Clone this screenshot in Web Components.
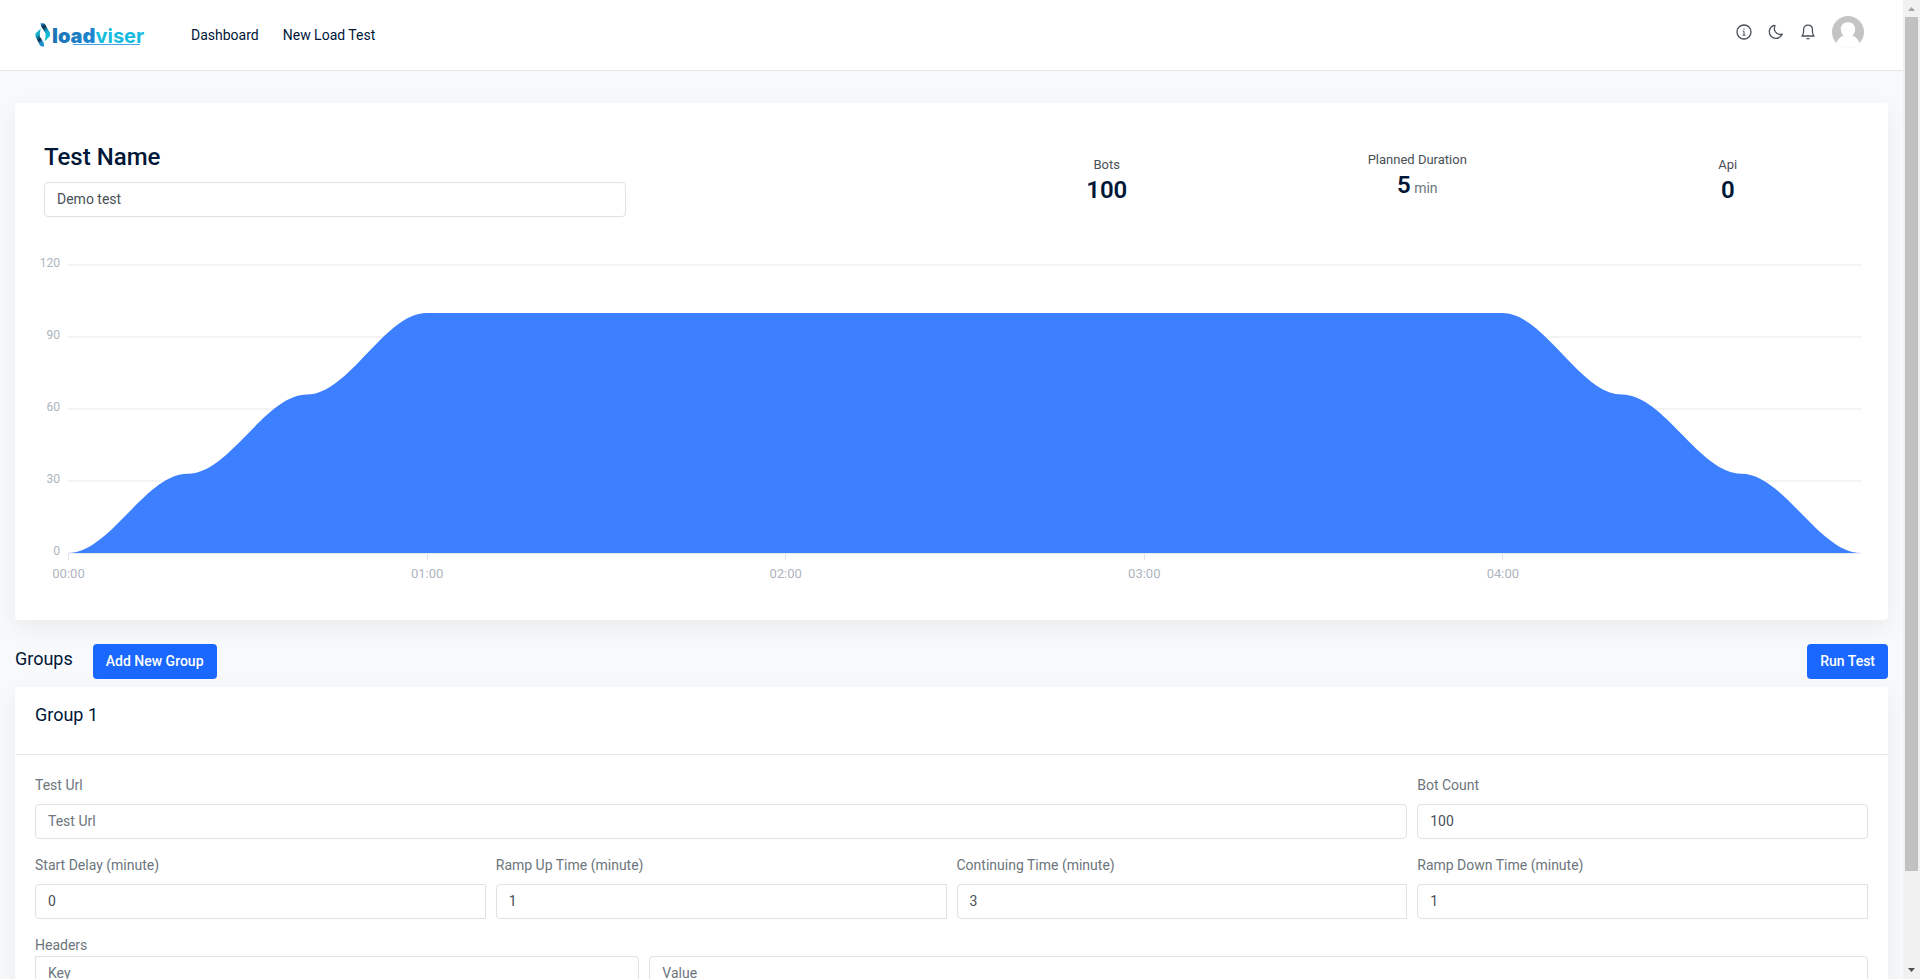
<!DOCTYPE html>
<html lang="en">
<head>
<meta charset="utf-8">
<meta name="viewport" content="width=device-width, initial-scale=1">
<title>Loadviser - New Load Test</title>
<style>
  html, body { height: 100%; }
  body {
    margin: 0;
    overflow: hidden;
    font: 14px/20px Roboto, "Liberation Sans", sans-serif;
    color: #495057;
    --ink: #001737;
    --muted: #6c757d;
    --line: #dee2e6;
    --primary: #1a68ff;
    --surface: #fff;
    --page: #f8f9fb;
  }
</style>
</head>
<body>

<app-shell>
  <top-bar slot="header"></top-bar>

  <panel-card>
    <test-summary>
      <test-name value="Demo test"></test-name>
      <stat-value label="Bots" value="100"></stat-value>
      <stat-value label="Planned Duration" value="5" unit="min"></stat-value>
      <stat-value label="Api" value="0"></stat-value>
    </test-summary>
    <load-chart></load-chart>
  </panel-card>

  <groups-bar></groups-bar>

  <panel-card>
    <group-form heading="Group 1">
      <form-field class="wide" label="Test Url" placeholder="Test Url"></form-field>
      <form-field label="Bot Count" value="100"></form-field>
      <form-field class="joined" label="Start Delay (minute)" value="0"></form-field>
      <form-field class="joined" label="Ramp Up Time (minute)" value="1"></form-field>
      <form-field class="joined" label="Continuing Time (minute)" value="3"></form-field>
      <form-field class="joined" label="Ramp Down Time (minute)" value="1"></form-field>
      <header-pair class="full"></header-pair>
    </group-form>
  </panel-card>
</app-shell>

<script>
const inputStyle = `
  input {
    box-sizing: border-box; width: 100%; height: 35px; margin: 0; padding: 0 12px 2px;
    border: 1px solid var(--line); border-radius: 4px; background: var(--surface);
    font: inherit; color: inherit; outline: none;
  }
  input::placeholder { color: var(--muted); opacity: 1; }
  input:focus { border-color: var(--primary); }
`;

function define(name, render) {
  customElements.define(name, class extends HTMLElement {
    constructor() {
      super();
      this.attachShadow({ mode: 'open' });
    }
    connectedCallback() {
      this.shadowRoot.innerHTML = render(this);
    }
  });
}
const attr = (el, name) => el.getAttribute(name) || '';

define('app-shell', () => `
  <style>
    :host { display: grid; grid-template-columns: minmax(0, 1fr) 17px; height: 100vh; background: var(--page); }
    .view { overflow: auto; scrollbar-width: none; }
    main { padding: 32px 15px; }
  </style>
  <div class="view">
    <slot name="header"></slot>
    <main><slot></slot></main>
  </div>
  <scroll-rail></scroll-rail>
`);

define('scroll-rail', () => `
  <style>
    :host { display: grid; grid-template-rows: 17px 94fr 10fr 17px; background: #f1f1f1; }
    svg { display: block; width: 17px; height: 17px; }
    svg:last-child { grid-row: 4; }
    .thumb { margin: 0 2px; background: #c1c1c1; }
  </style>
  <svg viewBox="0 0 17 17" aria-hidden="true"><path d="M5 11h7L8.500 7z" fill="#a3a3a3"/></svg>
  <div class="thumb"></div>
  <svg viewBox="0 0 17 17" aria-hidden="true"><path d="M5 6h7L8.500 10z" fill="#505050"/></svg>
`);

define('top-bar', () => `
  <style>
    :host { display: block; background: var(--surface); border-bottom: 1px solid #e4e7eb; }
    header { display: flex; align-items: center; height: 70px; padding: 0 39px 0 35px; }
    nav { display: flex; gap: 24px; margin-left: 44px; }
    a { color: var(--ink); text-decoration: none; }
    .brand svg { display: block; }
    .tools { display: flex; align-items: center; gap: 16px; margin: 0 0 6px auto; }
    button { display: block; padding: 0; border: 0; background: none; color: #495057; cursor: pointer; }
    button svg { display: block; }
  </style>
  <header>
    <a class="brand" href="#home" aria-label="loadviser">
      <svg width="112" height="28" viewBox="0 0 112 28">
        <defs>
          <linearGradient id="load" x1="0" x2="1"><stop offset="0" stop-color="#1c74b4"/><stop offset="1" stop-color="#1b9bf0"/></linearGradient>
          <linearGradient id="viser" x1="0" x2="1"><stop offset="0" stop-color="#12c2d8"/><stop offset="1" stop-color="#16b9e0"/></linearGradient>
          <linearGradient id="markL" x1="0" y1="0" x2="0.400" y2="1"><stop offset="0" stop-color="#12c6d8"/><stop offset="0.400" stop-color="#12a9c8"/><stop offset="0.700" stop-color="#0b2c46"/><stop offset="0.900" stop-color="#1c8fd0"/></linearGradient>
          <linearGradient id="markR" x1="0" y1="0" x2="0.400" y2="1"><stop offset="0" stop-color="#1c9ae6"/><stop offset="0.300" stop-color="#0b2c46"/><stop offset="0.600" stop-color="#12a9cf"/><stop offset="1" stop-color="#12c6d8"/></linearGradient>
        </defs>
        <path d="M5.800 7.500L0.500 12.500V15.500L5 24.500Q5.800 25.500 7.500 25.500H9.200L8.600 21.500L4.800 15.500L4.800 12Z" fill="url(#markL)"/>
        <path d="M5.500 2.200H7.500Q9.500 2.200 10.200 3.500L15 12V15L9.600 20.500L10.600 15.500V12.500L6.200 5.500Z" fill="url(#markR)"/>
        <text x="17" y="22" font-family="Inter, sans-serif" font-size="20"><tspan font-weight="900" fill="url(#load)">load</tspan><tspan font-weight="700" fill="url(#viser)">viser</tspan></text>
        <path d="M38 23.500H105" stroke="#45a5ea" stroke-width="1"/>
      </svg>
    </a>
    <nav>
      <a href="#dashboard">Dashboard</a>
      <a href="#new">New Load Test</a>
    </nav>
    <div class="tools">
      <button type="button" aria-label="Information">
        <svg width="16" height="16" viewBox="0 0 16 16" fill="none" stroke="currentColor" stroke-width="1.300">
          <circle cx="8" cy="8" r="7"/><path d="M6.800 7.200H8V11M6.500 11.200H9.500M7.400 5H8.600" stroke-width="1"/>
        </svg>
      </button>
      <button type="button" aria-label="Dark mode">
        <svg width="16" height="16" viewBox="0 0 16 16" fill="none" stroke="currentColor" stroke-width="1.300" stroke-linejoin="round">
          <path d="M5.200 1.600A6.700 6.700 0 1 0 14.200 10.200A6.300 6.300 0 0 1 7.400 7.800A6.300 6.300 0 0 1 7 1.600Q6 1.300 5.200 1.600Z"/>
        </svg>
      </button>
      <button type="button" aria-label="Notifications">
        <svg width="16" height="16" viewBox="0 0 16 16" fill="none" stroke="currentColor" stroke-width="1.300" stroke-linejoin="round" stroke-linecap="round">
          <path d="M2 12H14C12.800 11 12.400 9.500 12.400 7V5.500C12.400 3 10.700 1.200 8 1.200S3.600 3 3.600 5.500V7C3.600 9.500 3.200 11 2 12Z"/><path d="M7 14.700H9"/>
        </svg>
      </button>
      <button type="button" aria-label="Account">
        <svg width="32" height="32" viewBox="0 0 32 32">
          <defs><clipPath id="disc"><circle cx="16" cy="16" r="16"/></clipPath></defs>
          <g clip-path="url(#disc)">
            <rect width="32" height="32" fill="#c4c4c4"/>
            <path d="M16 6.200C20.500 6.200 23.200 9 23.200 13C23.200 16.500 21.500 18.700 20.300 19.600C24 21 26.500 23.500 28 28V32H4V28C5.500 23.500 8 21 11.700 19.600C10.500 18.700 8.800 16.500 8.800 13C8.800 9 11.500 6.200 16 6.200Z" fill="#fff"/>
          </g>
        </svg>
      </button>
    </div>
  </header>
`);

define('panel-card', () => `
  <style>
    :host { display: block; background: var(--surface); border-radius: 4px; box-shadow: 0 8px 24px rgba(0, 0, 0, .06); }
  </style>
  <slot></slot>
`);

define('test-summary', () => `
  <style>
    :host { display: grid; grid-template-columns: 4fr 2fr 2fr 2fr 2fr; align-items: center; padding: 39px 5px 0; }
    ::slotted(test-name) { grid-column: 1; }
    ::slotted(stat-value:nth-of-type(1)) { grid-column: 3; }
  </style>
  <slot></slot>
`);

define('test-name', el => `
  <style>
    :host { display: block; padding: 0 15px 0 24px; }
    label { display: block; padding-top: 1px; margin-bottom: 10px; font-size: 24px; line-height: 29px; font-weight: 500; color: var(--ink); }
    ${inputStyle}
  </style>
  <label for="name">Test Name</label>
  <input id="name" type="text" value="${attr(el, 'value')}">
`);

define('stat-value', el => `
  <style>
    :host { display: block; text-align: center; }
    .label { font-size: 13px; line-height: 20px; }
    .value { font-size: 24px; line-height: 30px; font-weight: 600; color: var(--ink); }
    .value.unit { padding-bottom: 6px; }
    small { font-size: 14px; font-weight: 400; color: var(--muted); }
  </style>
  <div class="label">${attr(el, 'label')}</div>
  <div class="value ${el.hasAttribute('unit') ? 'unit' : ''}">${attr(el, 'value')}${el.hasAttribute('unit') ? `<small> ${attr(el, 'unit')}</small>` : ''}</div>
`);

/* Area chart of active bots: one point per 20 seconds, y range 0 to 120. */
define('load-chart', () => {
  const points = [[0, 0], [1, 33], [2, 66], [3, 100], [12, 100], [13, 66], [14, 33], [15, 0]];
  let path = 'M0 120';
  for (let i = 1; i < points.length; i++) {
    const [x0, y0] = points[i - 1], [x1, y1] = points[i];
    const bend = (x1 - x0) * 0.35;
    path += `C${x0 + bend} ${120 - y0} ${x1 - bend} ${120 - y1} ${x1} ${120 - y1}`;
  }
  return `
  <style>
    :host {
      display: grid; grid-template-columns: 45px minmax(0, 1fr); column-gap: 8px;
      padding: 36px 27px 36px 0; font-size: 13px; color: #adb5c0;
    }
    .y { display: flex; flex-direction: column; justify-content: space-between; height: 308px; text-align: right; font-size: 12px; }
    .plot { padding-top: 12px; }
    svg { display: block; width: 100%; height: 288px; overflow: visible; }
    .grid { stroke: #f3f3f3; stroke-width: 2; }
    .x { display: grid; grid-template-columns: repeat(5, 1fr); border-top: 1px solid #e8eaee; }
    .x div { display: flex; flex-direction: column; align-items: center; width: 1px; white-space: nowrap; }
    .x div::before { content: ""; width: 1px; height: 6px; margin-bottom: 4px; background: #dfe2e6; }
  </style>
  <div class="y">${[120, 90, 60, 30, 0].map(n => `<span>${n}</span>`).join('')}</div>
  <div class="plot">
    <svg viewBox="0 0 15 120" preserveAspectRatio="none" role="img" aria-label="Bots over time">
      <path class="grid" d="M0 0H15M0 30H15M0 60H15M0 90H15" vector-effect="non-scaling-stroke"/>
      <path d="${path}Z" fill="#1a68ff" fill-opacity=".85"/>
    </svg>
    <div class="x">${['00:00', '01:00', '02:00', '03:00', '04:00'].map(t => `<div><span>${t}</span></div>`).join('')}</div>
  </div>`;
});

define('groups-bar', () => `
  <style>
    :host { display: flex; align-items: flex-start; gap: 20px; margin: 24px 0 8px; }
    h2 { margin: 0; font-size: 18px; line-height: 30px; font-weight: 400; color: var(--ink); }
    button {
      height: 35px; padding: 0 13px 2px; border: 0; border-radius: 4px; cursor: pointer;
      background: var(--primary); color: #fff; font: inherit; font-weight: 500;
    }
    .run { margin-left: auto; }
  </style>
  <h2>Groups</h2>
  <button type="button">Add New Group</button>
  <button class="run" type="button">Run Test</button>
`);

define('group-form', el => `
  <style>
    :host { display: block; }
    h3 { margin: 0; padding: 18px 20px 29px; border-bottom: 1px solid #e4e7eb; font-size: 18px; line-height: 20px; font-weight: 400; color: var(--ink); }
    form { display: grid; grid-template-columns: repeat(4, minmax(0, 1fr)); gap: 16px 10px; padding: 20px; }
    ::slotted(.wide) { grid-column: span 3; }
    ::slotted(.full) { grid-column: 1 / -1; }
  </style>
  <h3>${attr(el, 'heading')}</h3>
  <form><slot></slot></form>
`);

define('form-field', el => `
  <style>
    :host { display: block; }
    label { display: block; margin-bottom: 9px; color: var(--muted); }
    ${inputStyle}
    :host(.joined) input { border-radius: 4px 0 0 4px; }
  </style>
  <label for="field">${attr(el, 'label')}</label>
  <input id="field" type="text" value="${attr(el, 'value')}" placeholder="${attr(el, 'placeholder')}">
`);

define('header-pair', () => `
  <style>
    :host { display: grid; grid-template-columns: repeat(12, minmax(0, 1fr)); gap: 1px 10px; }
    label { grid-column: 1 / -1; color: var(--muted); }
    ${inputStyle}
    #key { grid-column: span 4; border-radius: 0 4px 4px 0; }
    #value { grid-column: span 8; }
  </style>
  <label for="key">Headers</label>
  <input id="key" type="text" placeholder="Key">
  <input id="value" type="text" placeholder="Value" aria-label="Header value">
`);
</script>
</body>
</html>
